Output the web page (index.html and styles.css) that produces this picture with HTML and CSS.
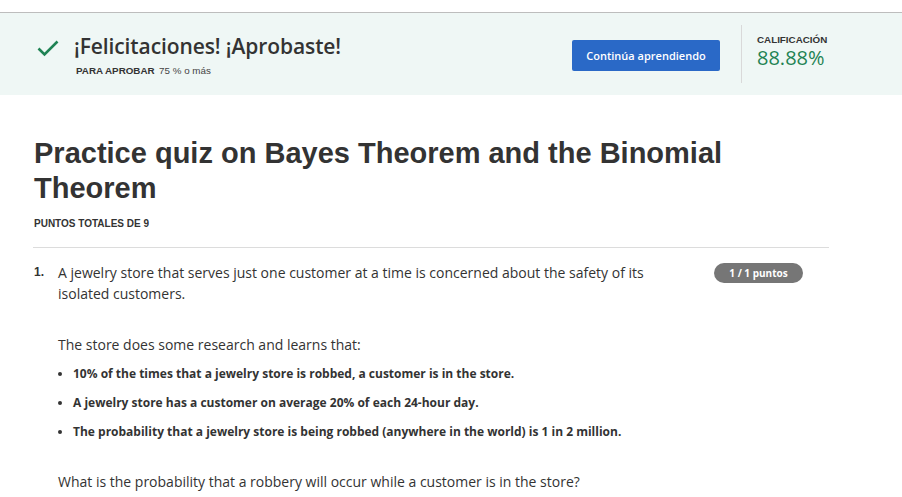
FILE: index.html
```html
<!DOCTYPE html>
<html lang="es">
<head>
<meta charset="utf-8">
<link rel="stylesheet" href="styles.css">
</head>
<body>
<div class="topgap"></div>
<header class="banner">
  <div class="status">
    <svg class="check" width="22" height="17" viewBox="0 0 22 17"><path d="M1.5 8.5 L7.5 14.5 L20.5 1.5" fill="none" stroke="#1f8354" stroke-width="2.6"/></svg>
    <div class="status-text">
      <h2 class="congrats">¡Felicitaciones! ¡Aprobaste!</h2>
      <div class="pass"><span class="pass-label">PARA APROBAR</span> <span class="pass-val">75 % o más</span></div>
    </div>
  </div>
  <button class="btn">Continúa aprendiendo</button>
  <div class="grade">
    <div class="grade-label">CALIFICACIÓN</div>
    <div class="grade-val">88.88%</div>
  </div>
</header>
<main class="content">
  <h1 class="title">Practice quiz on Bayes Theorem and the Binomial Theorem</h1>
  <div class="total">PUNTOS TOTALES DE 9</div>
  <div class="question">
    <div class="num">1.</div>
    <div class="qbody">
      <div class="qhead">
        <p class="qtext">A jewelry store that serves just one customer at a time is concerned about the safety of its isolated customers.</p>
        <span class="badge">1 / 1 puntos</span>
      </div>
      <p class="para">The store does some research and learns that:</p>
      <ul class="facts">
        <li>10% of the times that a jewelry store is robbed, a customer is in the store.</li>
        <li>A jewelry store has a customer on average 20% of each 24-hour day.</li>
        <li>The probability that a jewelry store is being robbed (anywhere in the world) is 1 in 2 million.</li>
      </ul>
      <p class="para ask">What is the probability that a robbery will occur while a customer is in the store?</p>
    </div>
  </div>
</main>
</body>
</html>
```
FILE: styles.css
```css
* { box-sizing: border-box; }
html, body { margin: 0; padding: 0; background: #fff; }
body { font-family: "Open Sans", "Liberation Sans", sans-serif; color: #333; width: 902px; height: 497px; overflow: hidden; }
.topgap { height: 13px; border-bottom: 1px solid #bdbdbd; }
.banner {
  height: 82px;
  background: #eff7f5;
  display: flex;
  align-items: flex-start;
  padding: 0 0 0 37px;
}
.status { display: flex; align-items: flex-start; flex: 1; padding-top: 19px; }
.check { margin-top: 8px; display: block; }
.status-text { margin-left: 15px; }
.congrats { margin: 0; font-size: 21px; font-weight: 600; line-height: 28px; color: #333; letter-spacing: -0.1px; }
.pass { margin-top: 4px; margin-left: 2px; font-size: 9.8px; line-height: 14px; color: #333; }
.pass-label { font-family: "Liberation Sans", Arial, sans-serif; font-weight: 700; }
.pass-val { font-family: "Liberation Sans", Arial, sans-serif; margin-left: 2px; color: #444; }
.btn {
  margin-top: 27px;
  width: 148px; height: 31px;
  background: #2a69c7;
  color: #fff;
  border: 0; border-radius: 2px;
  font-family: "Open Sans", sans-serif; font-size: 11px; font-weight: 600;
  padding: 0;
}
.grade {
  margin-left: 21px;
  margin-top: 12px;
  height: 58px;
  width: 161px;
  border-left: 1px solid #d9d9d9;
  padding-left: 15px;
  padding-top: 9px;
}
.grade-label { font-family: "Liberation Sans", Arial, sans-serif; font-weight: 700; font-size: 9.8px; line-height: 12px; color: #333; }
.grade-val { font-size: 20px; line-height: 24px; color: #1f8354; margin-top: 0; }
.content { padding: 0 73px 0 33px; }
.title {
  margin: 41px 0 0 1px;
  font-family: "Liberation Sans", Arial, sans-serif;
  font-weight: 700; font-size: 29px; line-height: 35px; color: #333;
  max-width: 740px;
}
.total { margin: 12px 0 0 1px; font-family: "Liberation Sans", Arial, sans-serif; font-weight: 700; font-size: 10px; line-height: 12px; color: #333; }
.question { margin-top: 17px; border-top: 1px solid #dcdcdc; padding-top: 14px; display: flex; }
.num { width: 25px; padding-left: 1px; font-family: "Liberation Sans", Arial, sans-serif; font-weight: 700; font-size: 12px; line-height: 21px; }
.qbody { flex: 1; }
.qhead { display: flex; align-items: flex-start; }
.qtext { margin: 0; width: 600px; font-size: 14px; line-height: 21px; color: #333; }
.badge {
  margin-left: 56px; margin-top: 1px;
  width: 89px; height: 20px; border-radius: 10px;
  background: #767676; color: #fff;
  font-size: 10px; font-weight: 700; line-height: 20px; text-align: center;
}
.para { margin: 0; font-size: 14px; line-height: 21px; color: #333; }
.qhead + .para { margin-top: 30px; }
.facts { margin: 11px 0 0 0; padding-left: 15px; font-size: 12px; font-weight: 700; line-height: 16px; }
.facts li { margin-bottom: 13px; }
.facts li::marker { font-size: 12px; }
.ask { margin-top: 31px; }
```
